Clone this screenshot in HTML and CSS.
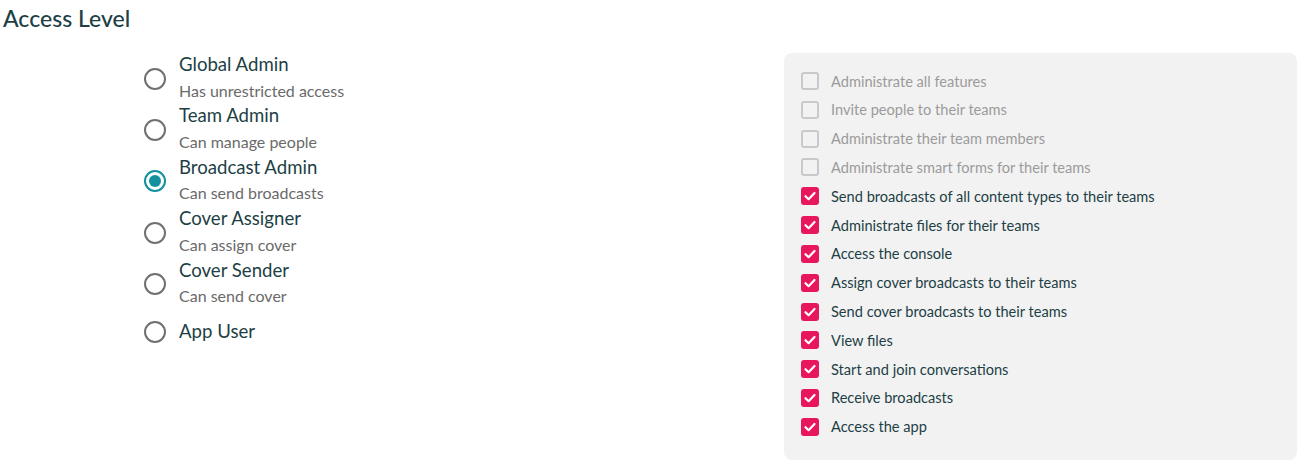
FILE: index.html
```html
<!DOCTYPE html>
<html>
<head>
<meta charset="utf-8">
<link rel="stylesheet" href="styles.css">
</head>
<body>
<h2 class="heading">Access Level</h2>
<div class="layout">
  <div class="roles">
    <div class="role">
      <span class="radio"></span>
      <div class="role-text"><div class="role-title">Global Admin</div><div class="role-sub">Has unrestricted access</div></div>
    </div>
    <div class="role">
      <span class="radio"></span>
      <div class="role-text"><div class="role-title">Team Admin</div><div class="role-sub">Can manage people</div></div>
    </div>
    <div class="role">
      <span class="radio checked"></span>
      <div class="role-text"><div class="role-title">Broadcast Admin</div><div class="role-sub">Can send broadcasts</div></div>
    </div>
    <div class="role">
      <span class="radio"></span>
      <div class="role-text"><div class="role-title">Cover Assigner</div><div class="role-sub">Can assign cover</div></div>
    </div>
    <div class="role">
      <span class="radio"></span>
      <div class="role-text"><div class="role-title">Cover Sender</div><div class="role-sub">Can send cover</div></div>
    </div>
    <div class="role single">
      <span class="radio"></span>
      <div class="role-text"><div class="role-title">App User</div></div>
    </div>
  </div>
  <div class="panel">
    <div class="perm off"><span class="box"></span>Administrate all features</div>
    <div class="perm off"><span class="box"></span>Invite people to their teams</div>
    <div class="perm off"><span class="box"></span>Administrate their team members</div>
    <div class="perm off"><span class="box"></span>Administrate smart forms for their teams</div>
    <div class="perm"><span class="box on"><svg viewBox="0 0 18 18"><path d="M4.5 9.2 L7.6 12.2 L13.5 6" /></svg></span>Send broadcasts of all content types to their teams</div>
    <div class="perm"><span class="box on"><svg viewBox="0 0 18 18"><path d="M4.5 9.2 L7.6 12.2 L13.5 6" /></svg></span>Administrate files for their teams</div>
    <div class="perm"><span class="box on"><svg viewBox="0 0 18 18"><path d="M4.5 9.2 L7.6 12.2 L13.5 6" /></svg></span>Access the console</div>
    <div class="perm"><span class="box on"><svg viewBox="0 0 18 18"><path d="M4.5 9.2 L7.6 12.2 L13.5 6" /></svg></span>Assign cover broadcasts to their teams</div>
    <div class="perm"><span class="box on"><svg viewBox="0 0 18 18"><path d="M4.5 9.2 L7.6 12.2 L13.5 6" /></svg></span>Send cover broadcasts to their teams</div>
    <div class="perm"><span class="box on"><svg viewBox="0 0 18 18"><path d="M4.5 9.2 L7.6 12.2 L13.5 6" /></svg></span>View files</div>
    <div class="perm"><span class="box on"><svg viewBox="0 0 18 18"><path d="M4.5 9.2 L7.6 12.2 L13.5 6" /></svg></span>Start and join conversations</div>
    <div class="perm"><span class="box on"><svg viewBox="0 0 18 18"><path d="M4.5 9.2 L7.6 12.2 L13.5 6" /></svg></span>Receive broadcasts</div>
    <div class="perm"><span class="box on"><svg viewBox="0 0 18 18"><path d="M4.5 9.2 L7.6 12.2 L13.5 6" /></svg></span>Access the app</div>
  </div>
</div>
</body>
</html>
```
FILE: styles.css
```css
html, body {
  margin: 0;
  padding: 0;
  background: #ffffff;
}
body {
  font-family: "Lato", "Open Sans", sans-serif;
  color: #1d3f45;
}
.heading {
  margin: 0;
  padding: 4px 0 0 3px;
  height: 48px;
  box-sizing: border-box;
  font-size: 23px;
  font-weight: 500;
  line-height: 28px;
  color: #1d3f45;
}
.layout {
  display: grid;
  grid-template-columns: 784px 513px;
  padding-top: 5px;
}
.roles {
  padding-left: 144px;
  display: flex;
  flex-direction: column;
}
.role {
  display: flex;
  align-items: center;
  height: 51.4px;
}
.role.single {
  height: 44px;
}
.radio {
  width: 22px;
  height: 22px;
  box-sizing: border-box;
  border: 2px solid #707070;
  border-radius: 50%;
  margin-right: 13px;
  flex: none;
  position: relative;
}
.radio.checked {
  border-color: #13919e;
}
.radio.checked::after {
  content: "";
  position: absolute;
  left: 3px;
  top: 3px;
  width: 12px;
  height: 12px;
  border-radius: 50%;
  background: #13919e;
}
.role-title {
  font-size: 18.6px;
  line-height: 25.7px;
  color: #1d3f45;
  margin-top: -2px;
}
.role-sub {
  font-size: 16px;
  line-height: 25.7px;
  color: #6a6a6a;
}
.role.single .role-title {
  margin-top: 0;
}
.panel {
  background: #f2f2f2;
  border-radius: 8px;
  padding: 13.6px 17px 19.6px;
  height: 407px;
  box-sizing: border-box;
}
.perm {
  display: flex;
  align-items: center;
  height: 28.82px;
  font-size: 14.6px;
  color: #1d3f45;
}
.perm.off {
  color: #9b9b9b;
}
.box {
  width: 18px;
  height: 18px;
  box-sizing: border-box;
  border: 2px solid #c9c9c9;
  border-radius: 3px;
  margin-right: 12px;
  flex: none;
  display: flex;
}
.box.on {
  border: none;
  background: #e8175d;
}
.box svg {
  width: 18px;
  height: 18px;
}
.box path {
  fill: none;
  stroke: #ffffff;
  stroke-width: 2.2;
  stroke-linecap: round;
  stroke-linejoin: round;
}
```
